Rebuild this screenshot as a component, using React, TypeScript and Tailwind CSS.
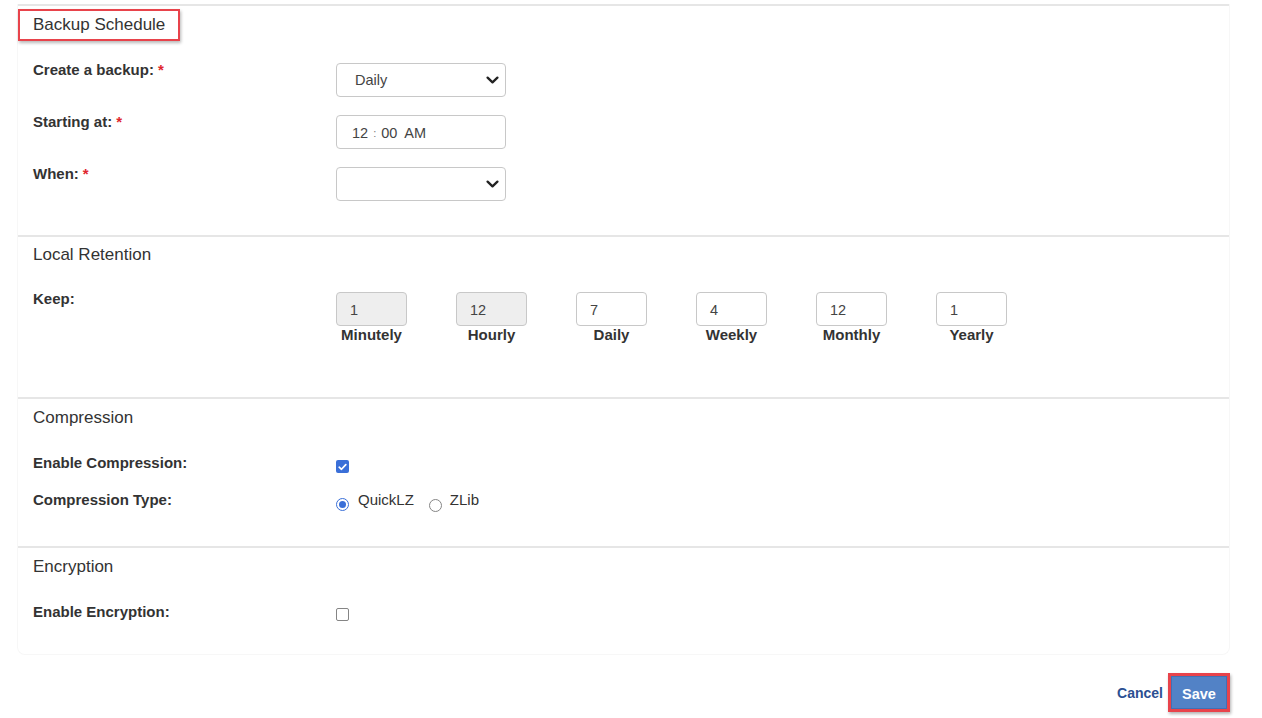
import React from "react";

const sans = "font-['Liberation_Sans',Arial,sans-serif]";

function Chevron() {
  return (
    <svg width="13" height="9" viewBox="0 0 13 9" fill="none">
      <path d="M1.6 1.6 L6.5 6.4 L11.4 1.6" stroke="#222" strokeWidth="2.3" strokeLinecap="round" strokeLinejoin="round" />
    </svg>
  );
}

function SelectBox({ value }: { value?: string }) {
  return (
    <div className="flex h-[34px] w-[170px] items-center justify-between rounded-[4px] border border-[#c8c8c8] bg-white pl-[18px] pr-[6px] text-[14.5px] text-[#444]">
      <span className="pt-[2px]">{value ?? ""}</span>
      <Chevron />
    </div>
  );
}

function TimeBox() {
  return (
    <div className="flex h-[34px] w-[170px] items-center rounded-[4px] border border-[#c8c8c8] bg-white pl-[15px] pt-[3px] text-[14.5px] text-[#444]">
      <span>12</span>
      <span className="mx-[5px] text-[11px] text-[#777]">:</span>
      <span>00</span>
      <span className="ml-[7px]">AM</span>
    </div>
  );
}

function Label({ text, required }: { text: string; required?: boolean }) {
  return (
    <div className="w-[303px] shrink-0 text-[15px] font-bold leading-[18px] text-[#333]">
      {text}
      {required && <span className="ml-[4px] text-[#e0262d]">*</span>}
    </div>
  );
}

function Heading({ title, top }: { title: string; top: string }) {
  return <div className={`${top} pl-[15px] text-[17px] leading-[20px] text-[#333]`}>{title}</div>;
}

function Checkbox({ checked }: { checked?: boolean }) {
  if (checked) {
    return (
      <div className="flex h-[13px] w-[13px] items-center justify-center rounded-[2px] bg-[#3a6fd8]">
        <svg width="9" height="8" viewBox="0 0 9 8" fill="none">
          <path d="M1.2 4.2 L3.5 6.3 L7.8 1.6" stroke="white" strokeWidth="1.7" strokeLinecap="round" strokeLinejoin="round" />
        </svg>
      </div>
    );
  }
  return <div className="h-[13px] w-[13px] rounded-[2px] border border-[#858585] bg-white" />;
}

function Radio({ checked }: { checked?: boolean }) {
  if (checked) {
    return (
      <div className="flex h-[13px] w-[13px] items-center justify-center rounded-full border border-[#3a6fd8] bg-white">
        <div className="h-[7px] w-[7px] rounded-full bg-[#3a6fd8]" />
      </div>
    );
  }
  return <div className="h-[13px] w-[13px] rounded-full border border-[#858585] bg-white" />;
}

const retention = [
  { value: "1", label: "Minutely", disabled: true },
  { value: "12", label: "Hourly", disabled: true },
  { value: "7", label: "Daily" },
  { value: "4", label: "Weekly" },
  { value: "12", label: "Monthly" },
  { value: "1", label: "Yearly" },
];

export default function App() {
  return (
    <div className={`${sans} min-h-[718px] w-[1262px] bg-white pt-[4px]`}>
      <div className="ml-[17px] w-[1213px] rounded-b-[8px] border-x border-b border-[#f7f7f7]">
        {/* Backup schedule */}
        <section className="border-t-2 border-[#e6e6e6] pb-[34px]">
          <div className="mt-[3px] inline-block h-[32px] border-2 border-[#e8434b] pl-[13px] pr-[13px] pt-[4px] text-[17px] leading-[20px] text-[#333] shadow-[1px_2px_3px_rgba(0,0,0,0.28)]">
            Backup Schedule
          </div>
          <div className="mt-[20px] flex flex-col gap-[16px] pl-[15px]">
            <div className="flex items-start">
              <Label text="Create a backup:" required />
              <div className="pt-[2px]">
                <SelectBox value="Daily" />
              </div>
            </div>
            <div className="flex items-start">
              <Label text="Starting at:" required />
              <div className="pt-[2px]">
                <TimeBox />
              </div>
            </div>
            <div className="flex items-start">
              <Label text="When:" required />
              <div className="pt-[2px]">
                <SelectBox />
              </div>
            </div>
          </div>
        </section>

        {/* Local retention */}
        <section className="border-t-2 border-[#e6e6e6] pb-[54px]">
          <Heading title="Local Retention" top="pt-[8px]" />
          <div className="mt-[25px] flex items-start pl-[15px]">
            <Label text="Keep:" />
            <div className="flex gap-[49px] pt-[2px]">
              {retention.map((r) => (
                <div key={r.label} className="flex w-[71px] flex-col items-center">
                  <div
                    className={`flex h-[34px] w-[71px] items-center rounded-[4px] border border-[#c8c8c8] pl-[13px] pt-[3px] text-[14.5px] text-[#444] ${
                      r.disabled ? "bg-[#eeeeee]" : "bg-white"
                    }`}
                  >
                    {r.value}
                  </div>
                  <div className="text-[15px] font-bold leading-[17px] text-[#333]">{r.label}</div>
                </div>
              ))}
            </div>
          </div>
        </section>

        {/* Compression */}
        <section className="border-t-2 border-[#e6e6e6] pb-[34px]">
          <Heading title="Compression" top="pt-[9px]" />
          <div className="mt-[26px] flex flex-col gap-[18px] pl-[15px]">
            <div className="flex items-start">
              <Label text="Enable Compression:" />
              <div className="pt-[6px]">
                <Checkbox checked />
              </div>
            </div>
            <div className="flex items-start">
              <Label text="Compression Type:" />
              <div className="flex items-start text-[15px] leading-[18px] text-[#333]">
                <div className="pt-[7px]">
                  <Radio checked />
                </div>
                <span className="ml-[9px]">QuickLZ</span>
                <div className="ml-[15px] pt-[8px]">
                  <Radio />
                </div>
                <span className="ml-[8px]">ZLib</span>
              </div>
            </div>
          </div>
        </section>

        {/* Encryption */}
        <section className="border-t-2 border-[#e6e6e6] pb-[33px]">
          <Heading title="Encryption" top="pt-[9px]" />
          <div className="mt-[26px] flex items-start pl-[15px]">
            <Label text="Enable Encryption:" />
            <div className="pt-[5px]">
              <Checkbox />
            </div>
          </div>
        </section>
      </div>

      {/* Form actions */}
      <div className="mt-[18px] flex items-center justify-end pr-[32px]">
        <span className="mt-[1px] text-[14px] font-bold text-[#2b4f92]">Cancel</span>
        <div className="ml-[5px] h-[39px] w-[62px] border-[3px] border-[#e8434b] shadow-[1px_2px_3px_rgba(0,0,0,0.3)]">
          <div className="flex h-full w-full items-center justify-center border border-[#4170b5] bg-[#5282c6] pt-[5px] text-[14.5px] font-bold text-white">
            Save
          </div>
        </div>
      </div>
    </div>
  );
}
